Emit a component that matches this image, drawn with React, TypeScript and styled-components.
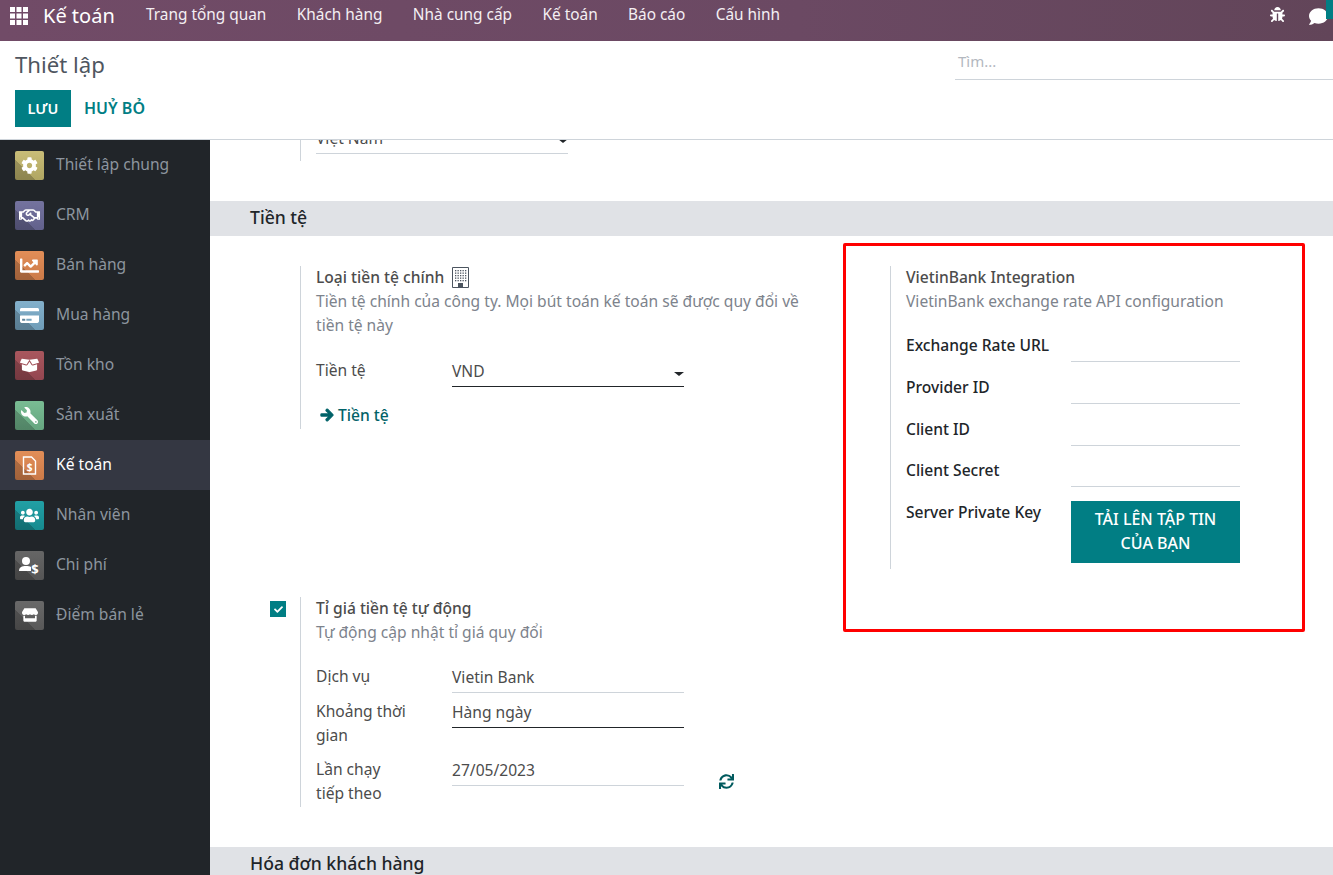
import React from 'react';
import styled, { createGlobalStyle } from 'styled-components';
import {
  FaArrowRight,
  FaBoxOpen,
  FaBug,
  FaChartLine,
  FaCheck,
  FaCog,
  FaComment,
  FaCreditCard,
  FaRegHandshake,
  FaStore,
  FaSync,
  FaUsers,
  FaWrench,
} from 'react-icons/fa';

const GlobalStyle = createGlobalStyle`
  html, body {
    margin: 0;
    padding: 0;
    height: 100%;
    overflow: hidden;
    background: #fff;
  }
  body {
    font-family: "Noto Sans", "Open Sans", sans-serif;
    font-size: 15.6px;
    line-height: 24px;
    color: #4c4c4c;
  }
`;

const Page = styled.div`
  position: relative;
  display: flex;
  flex-direction: column;
  width: 1333px;
  height: 875px;
  overflow: hidden;
`;

const TopBar = styled.header`
  display: flex;
  flex: none;
  height: 41px;
  padding-left: 10px;
  background: linear-gradient(90deg, #714b67, #6b4963 60%, #624559);
  color: #fff;
`;

const AppsIcon = styled.svg`
  width: 18px;
  height: 18px;
  margin: 7px 15px 0 0;
  fill: #fff;
`;

const Brand = styled.span`
  font-size: 20px;
  line-height: 32px;
  margin-right: 16px;
`;

const NavItem = styled.span`
  padding: 0 15.2px;
  font-size: 15.4px;
  line-height: 30px;
  color: #f4eff3;
`;

const NavTools = styled.div`
  position: relative;
  display: flex;
  margin-left: auto;
  gap: 24px;
  padding: 7px 5px 0 0;
  font-size: 15px;
`;

const ChatBadge = styled.span`
  position: absolute;
  top: 0;
  right: 0;
  width: 7px;
  height: 19px;
  background: #017e84;
`;

const ControlPanel = styled.section`
  display: flex;
  flex: none;
  justify-content: space-between;
  height: 98px;
  padding-left: 15px;
  border-bottom: 1px solid #ced4da;
  background: #fff;
`;

const PanelLeft = styled.div`
  display: flex;
  flex-direction: column;
`;

const PageTitle = styled.h1`
  margin: 9px 0 10px;
  font-size: 22.2px;
  line-height: 30px;
  font-weight: 400;
  color: #4f5660;
`;

const Actions = styled.div`
  display: flex;
  align-items: center;
  gap: 13px;
`;

const SaveButton = styled.button`
  width: 56px;
  height: 37px;
  padding: 0 0 2px;
  border: 0;
  background: #017e84;
  color: #fff;
  font: 600 14.5px "Noto Sans", sans-serif;
`;

const DiscardButton = styled.button`
  padding: 0 0 2px;
  border: 0;
  background: none;
  color: #017e84;
  font: 600 16px "Noto Sans", sans-serif;
`;

const Search = styled.div`
  align-self: flex-start;
  box-sizing: border-box;
  width: 378px;
  height: 31px;
  margin-top: 8px;
  padding-left: 3px;
  border-bottom: 1px solid #ced4da;
  color: #b3b8bf;
  font-size: 15px;
`;

const Body = styled.div`
  display: flex;
  flex: 1;
  min-height: 0;
`;

const Sidebar = styled.nav`
  flex: none;
  width: 210px;
  background: #212529;
`;

const SideItem = styled.div<{ $active?: boolean }>`
  display: flex;
  align-items: center;
  gap: 12px;
  height: 50px;
  padding-left: 15px;
  background: ${({ $active }) => ($active ? '#343742' : 'transparent')};
  color: ${({ $active }) => ($active ? '#fff' : '#8d959f')};
`;

const SideLabel = styled.span`
  margin-bottom: 3px;
`;

const AppIcon = styled.span<{ $from: string; $to: string }>`
  display: flex;
  flex: none;
  align-items: center;
  justify-content: center;
  width: 29px;
  height: 29px;
  border-radius: 2px;
  color: #fff;
  font-size: 15px;
  background:
    linear-gradient(45deg, rgba(0, 0, 0, 0.2) 36%, transparent 36%),
    linear-gradient(180deg, ${({ $from }) => $from}, ${({ $to }) => $to});
`;

const MirroredWrench = styled(FaWrench)`
  transform: scaleX(-1);
`;

const Main = styled.main`
  flex: 1;
  min-width: 0;
  overflow: hidden;
`;

const ScrolledBox = styled.div`
  display: flex;
  margin: -15px 0 40px 90px;
  padding: 0 0 7px 15px;
  border-left: 1px solid #ced4da;
`;

const SectionBar = styled.h2`
  margin: 0;
  height: 35px;
  padding-left: 40px;
  background: #e0e2e6;
  color: #212529;
  font-size: 17.6px;
  line-height: 33px;
  font-weight: 500;
`;

const SettingsGrid = styled.div`
  display: grid;
  grid-template-columns: 590px 1fr;
  row-gap: 28px;
  padding: 30px 0 40px 30px;
`;

const Setting = styled.div`
  display: flex;
  align-items: flex-start;
`;

const SettingLeft = styled.div`
  flex: none;
  box-sizing: border-box;
  width: 60px;
  padding: 4px 0 0 30px;
`;

const SettingRight = styled.div`
  flex: 1;
  border-left: 1px solid #ced4da;
  padding-left: 15px;
`;

const Checkbox = styled.span`
  display: flex;
  align-items: center;
  justify-content: center;
  width: 16px;
  height: 16px;
  background: #017e84;
  color: #fff;
  font-size: 9px;
`;

const SettingTitle = styled.div`
  display: flex;
  align-items: center;
  gap: 8px;
  box-sizing: border-box;
  height: 24px;
  padding-bottom: 2px;
  font-weight: 500;
  color: #4c4c4c;
`;

const Muted = styled.div`
  width: 505px;
  margin-top: -1px;
  color: #7d838c;
`;

const Rows = styled.div<{ $top: number }>`
  margin-top: ${({ $top }) => $top}px;
`;

const FormRow = styled.div`
  display: flex;
  & + & {
    margin-top: 6px;
  }
`;

const FormLabel = styled.div`
  flex: none;
  box-sizing: border-box;
  width: 136px;
  padding: 0 42px 4px 0;
  color: #4c4c4c;
  ${FormRow}:last-child > & {
    padding-bottom: 2px;
  }
`;

const FormValue = styled.div<{ $dark?: boolean; $width?: number }>`
  position: relative;
  flex: none;
  box-sizing: border-box;
  width: ${({ $width }) => $width ?? 232}px;
  height: 29px;
  padding-top: 1px;
  border-bottom: 1px solid ${({ $dark }) => ($dark ? '#212529' : '#ced4da')};
  color: #4c4c4c;
`;

const Caret = styled.span`
  position: absolute;
  right: 0;
  top: 14px;
  border-top: 4px solid #212529;
  border-left: 5px solid transparent;
  border-right: 5px solid transparent;
`;

const RefreshButton = styled.span`
  display: flex;
  margin: 17px 0 0 35px;
  color: #015a5e;
  font-size: 15px;
`;

const LinkAction = styled.a`
  display: flex;
  align-items: center;
  gap: 4px;
  margin: 16px 0 2px 4px;
  color: #016268;
  font-weight: 500;
`;

const BoldArrow = styled(FaArrowRight)`
  stroke: currentColor;
  stroke-width: 40px;
`;

const FieldList = styled.div`
  margin-top: 20px;
`;

const FieldRow = styled.div`
  display: flex;
  margin-bottom: 12.75px;
  &:last-child {
    margin-bottom: 0;
  }
`;

const FieldLabel = styled.div`
  flex: none;
  width: 165px;
  color: #212529;
  font-weight: 500;
`;

const FieldInput = styled.div`
  box-sizing: border-box;
  width: 169px;
  height: 29px;
  border-bottom: 1px solid #ced4da;
`;

const UploadButton = styled.button`
  width: 169px;
  height: 62px;
  margin: 1px 0 6px;
  padding: 0 16px 2px;
  border: 0;
  background: #017e84;
  color: #fff;
  font: 500 16px/24.5px "Noto Sans", sans-serif;
`;

const Annotation = styled.div`
  position: absolute;
  left: 843px;
  top: 243px;
  width: 462px;
  height: 389px;
  box-sizing: border-box;
  border: 3.5px solid #f00;
  border-radius: 2px;
  pointer-events: none;
`;

const DocDollarIcon = () => (
  <svg width="17" height="19" viewBox="0 0 17 19">
    <path d="M2.5 1h8l4 4v13h-12z" fill="none" stroke="#fff" strokeWidth="1.4" />
    <text x="8.5" y="14.5" fontSize="10" fontWeight="700" fill="#fff" textAnchor="middle">$</text>
  </svg>
);

const ExpenseIcon = () => (
  <svg width="21" height="19" viewBox="0 0 21 19">
    <circle cx="7" cy="5" r="4" fill="#fff" />
    <path d="M0 15c0-4 3-5 7-5 2 0 4 .3 5 1v4z" fill="#fff" />
    <text x="16" y="18" fontSize="13" fontWeight="700" fill="#fff" textAnchor="middle">$</text>
  </svg>
);

// the company-currency hint icon: an outlined tower with a tight grid of windows
const BuildingIcon = () => (
  <svg width="17" height="21" viewBox="0 0 17 21" fill="#4c5560">
    <path d="M.5.5h16v20H.5z" fill="none" stroke="#4c5560" />
    {[3, 5.5, 8, 10.5, 13].flatMap((y) =>
      [3, 5.5, 8, 10.5, 13].map((x) => <rect key={`${x}-${y}`} x={x} y={y} width="1.3" height="1.3" />),
    )}
    <rect x="6" y="16" width="5" height="4.5" />
  </svg>
);

const sideItems = [
  { label: 'Thiết lập chung', from: '#c9bd78', to: '#b0a662', icon: <FaCog size={17} /> },
  { label: 'CRM', from: '#74739e', to: '#62618c', icon: <FaRegHandshake size={21} /> },
  { label: 'Bán hàng', from: '#e28e58', to: '#cb7a48', icon: <FaChartLine size={19} /> },
  { label: 'Mua hàng', from: '#83b0cb', to: '#6f9db8', icon: <FaCreditCard size={19} /> },
  { label: 'Tồn kho', from: '#a9575e', to: '#934650', icon: <FaBoxOpen size={19} /> },
  { label: 'Sản xuất', from: '#79bc93', to: '#66a680', icon: <MirroredWrench size={17} /> },
  { label: 'Kế toán', from: '#e28e58', to: '#cb7a48', icon: <DocDollarIcon />, active: true },
  { label: 'Nhân viên', from: '#22a0a5', to: '#168a8f', icon: <FaUsers size={19} /> },
  { label: 'Chi phí', from: '#666666', to: '#555555', icon: <ExpenseIcon /> },
  { label: 'Điểm bán lẻ', from: '#696969', to: '#585858', icon: <FaStore size={16} /> },
];

const navItems = ['Trang tổng quan', 'Khách hàng', 'Nhà cung cấp', 'Kế toán', 'Báo cáo', 'Cấu hình'];
const apiFields = ['Exchange Rate URL', 'Provider ID', 'Client ID', 'Client Secret'];

export default function App() {
  return (
    <Page>
      <GlobalStyle />
      <TopBar>
        <AppsIcon viewBox="0 0 18 18">
          {[0, 6.5, 13].flatMap((y) =>
            [0, 6.5, 13].map((x) => <rect key={`${x}-${y}`} x={x} y={y} width="5" height="5" />),
          )}
        </AppsIcon>
        <Brand>Kế toán</Brand>
        {navItems.map((item) => (
          <NavItem key={item}>{item}</NavItem>
        ))}
        <NavTools>
          <FaBug />
          <FaComment size={19} />
          <ChatBadge />
        </NavTools>
      </TopBar>

      <ControlPanel>
        <PanelLeft>
          <PageTitle>Thiết lập</PageTitle>
          <Actions>
            <SaveButton>LƯU</SaveButton>
            <DiscardButton>HUỶ BỎ</DiscardButton>
          </Actions>
        </PanelLeft>
        <Search>Tìm...</Search>
      </ControlPanel>

      <Body>
        <Sidebar>
          {sideItems.map((item) => (
            <SideItem key={item.label} $active={item.active}>
              <AppIcon $from={item.from} $to={item.to}>{item.icon}</AppIcon>
              <SideLabel>{item.label}</SideLabel>
            </SideItem>
          ))}
        </Sidebar>

        <Main>
          <ScrolledBox>
            <FormValue $width={252}>
              Việt Nam
              <Caret />
            </FormValue>
          </ScrolledBox>

          <SectionBar>Tiền tệ</SectionBar>
          <SettingsGrid>
            <Setting>
              <SettingLeft />
              <SettingRight>
                <SettingTitle>
                  Loại tiền tệ chính <BuildingIcon />
                </SettingTitle>
                <Muted>Tiền tệ chính của công ty. Mọi bút toán kế toán sẽ được quy đổi về tiền tệ này</Muted>
                <Rows $top={21}>
                  <FormRow>
                    <FormLabel>Tiền tệ</FormLabel>
                    <FormValue $dark>
                      VND
                      <Caret />
                    </FormValue>
                  </FormRow>
                </Rows>
                <LinkAction>
                  <BoldArrow size={14} /> Tiền tệ
                </LinkAction>
              </SettingRight>
            </Setting>

            <Setting>
              <SettingLeft />
              <SettingRight>
                <SettingTitle>VietinBank Integration</SettingTitle>
                <Muted>VietinBank exchange rate API configuration</Muted>
                <FieldList>
                  {apiFields.map((field) => (
                    <FieldRow key={field}>
                      <FieldLabel>{field}</FieldLabel>
                      <FieldInput />
                    </FieldRow>
                  ))}
                  <FieldRow>
                    <FieldLabel>Server Private Key</FieldLabel>
                    <UploadButton>TẢI LÊN TẬP TIN CỦA BẠN</UploadButton>
                  </FieldRow>
                </FieldList>
              </SettingRight>
            </Setting>

            <Setting>
              <SettingLeft>
                <Checkbox>
                  <FaCheck />
                </Checkbox>
              </SettingLeft>
              <SettingRight>
                <SettingTitle>Tỉ giá tiền tệ tự động</SettingTitle>
                <Muted>Tự động cập nhật tỉ giá quy đổi</Muted>
                <Rows $top={20}>
                  <FormRow>
                    <FormLabel>Dịch vụ</FormLabel>
                    <FormValue>Vietin Bank</FormValue>
                  </FormRow>
                  <FormRow>
                    <FormLabel>Khoảng thời gian</FormLabel>
                    <FormValue $dark>Hàng ngày</FormValue>
                  </FormRow>
                  <FormRow>
                    <FormLabel>Lần chạy tiếp theo</FormLabel>
                    <FormValue>27/05/2023</FormValue>
                    <RefreshButton>
                      <FaSync />
                    </RefreshButton>
                  </FormRow>
                </Rows>
              </SettingRight>
            </Setting>
          </SettingsGrid>

          <SectionBar>Hóa đơn khách hàng</SectionBar>
        </Main>
      </Body>

      <Annotation />
    </Page>
  );
}
